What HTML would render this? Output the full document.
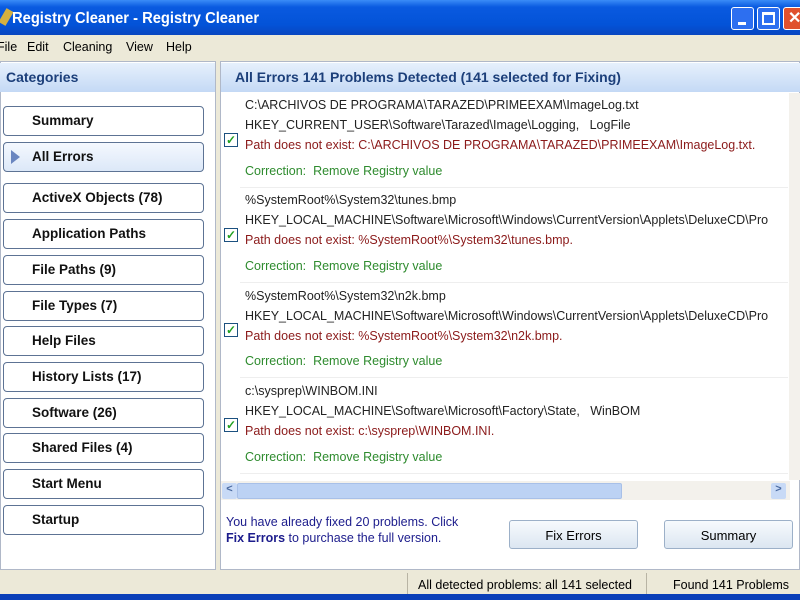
<!DOCTYPE html>
<html><head><style>
*{margin:0;padding:0;box-sizing:border-box}
body{width:800px;height:600px;overflow:hidden;background:#ece9d8;font-family:"Liberation Sans",Tahoma,sans-serif;position:relative;font-size:13px}
.a{position:absolute}
.title{left:0;top:0;width:800px;height:35px;background:linear-gradient(#3a8cf7,#0a5ae0 20%,#0353d8 70%,#0846c0);color:#fff;font-weight:bold;font-size:16px}
.menu{top:35px;left:0;width:800px;height:25px;background:#ece9d8}
.menu span{position:absolute;top:5px;font-size:12.5px}
.hdr{background:linear-gradient(#e6f0fc,#c4d9f5);color:#1c3f7a;font-weight:bold;font-size:14px;height:29px;top:63px;padding:6px}
.btn{position:absolute;left:3px;width:201px;height:30px;border:1px solid #5d7394;border-radius:4px;background:#fff;font-weight:bold;font-size:13.5px;padding:6px 0 0 28px;color:#111}
.sel{background:linear-gradient(#f4f8fe,#dce8f8)}
.e{position:absolute;left:245px;font-size:12.5px;white-space:nowrap;color:#222}
.r{color:#8b1a1a}.g{color:#2e8b2e}
.cb{position:absolute;left:224px;width:14px;height:14px;border:1px solid #1c5180;background:#fff;color:#21a121;font-size:12px;line-height:12px;text-align:center;font-weight:bold}
.div{position:absolute;left:240px;width:548px;height:1px;background:#eee}
.pb{position:absolute;top:520px;height:29px;border:1px solid #9cb0c8;border-radius:3px;background:linear-gradient(#f7fafd,#dce6f1);text-align:center;padding-top:7px;font-size:13px}
</style></head><body>
<div class="a title"><div class="a" style="left:2px;top:9px;width:8px;height:16px;background:#d4b040;transform:rotate(30deg)"></div><div class="a" style="left:12px;top:10px;transform:scaleX(0.92);transform-origin:left">Registry Cleaner - Registry Cleaner</div>
<div class="a" style="left:731px;top:7px;width:23px;height:23px;border:1px solid #fff;border-radius:3px;background:#2d6ff0"><div class="a" style="left:6px;top:14px;width:8px;height:3px;background:#fff"></div></div>
<div class="a" style="left:757px;top:7px;width:23px;height:23px;border:1px solid #fff;border-radius:3px;background:#2d6ff0"><div class="a" style="left:4px;top:4px;width:13px;height:13px;border:2px solid #fff;border-top-width:3px"></div></div>
<div class="a" style="left:783px;top:7px;width:23px;height:23px;border:1px solid #fff;border-radius:3px;background:#e0512e;color:#fff;font-size:16px;padding-left:4px">✕</div>
</div>
<div class="a menu"><span style="left:-3px">File</span><span style="left:27px">Edit</span><span style="left:63px">Cleaning</span><span style="left:126px">View</span><span style="left:166px">Help</span></div>
<div class="a" style="left:0;top:61px;width:216px;height:509px;background:#fff;border:1px solid #b0b8c8"></div>
<div class="a hdr" style="left:0;width:215px">Categories</div>
<div class="btn" style="top:106px">Summary</div>
<div class="btn sel" style="top:142px"><span class="a" style="left:7px;top:7px;width:0;height:0;border-left:9px solid #6a86c0;border-top:7px solid transparent;border-bottom:7px solid transparent"></span>All Errors</div>
<div class="btn" style="top:183px">ActiveX Objects (78)</div>
<div class="btn" style="top:219px">Application Paths</div>
<div class="btn" style="top:255px">File Paths (9)</div>
<div class="btn" style="top:291px">File Types (7)</div>
<div class="btn" style="top:326px">Help Files</div>
<div class="btn" style="top:362px">History Lists (17)</div>
<div class="btn" style="top:398px">Software (26)</div>
<div class="btn" style="top:433px">Shared Files (4)</div>
<div class="btn" style="top:469px">Start Menu</div>
<div class="btn" style="top:505px">Startup</div>
<div class="a" style="left:220px;top:61px;width:580px;height:509px;background:#fff;border:1px solid #b0b8c8"></div>
<div class="a hdr" style="left:221px;width:579px;padding-left:14px">All Errors 141 Problems Detected (141 selected for Fixing)</div>
<div class="a" style="left:789px;top:93px;width:11px;height:387px;background:#f3f1ec"></div>

<div class="e" style="top:98px">C:\ARCHIVOS DE PROGRAMA\TARAZED\PRIMEEXAM\ImageLog.txt</div>
<div class="e" style="top:118px">HKEY_CURRENT_USER\Software\Tarazed\Image\Logging,&nbsp;&nbsp; LogFile</div>
<div class="e r" style="top:138px">Path does not exist: C:\ARCHIVOS DE PROGRAMA\TARAZED\PRIMEEXAM\ImageLog.txt.</div>
<div class="e g" style="top:164px">Correction:&nbsp; Remove Registry value</div>
<div class="cb" style="top:133px">✓</div><div class="div" style="top:187px"></div>

<div class="e" style="top:193px">%SystemRoot%\System32\tunes.bmp</div>
<div class="e" style="top:213px">HKEY_LOCAL_MACHINE\Software\Microsoft\Windows\CurrentVersion\Applets\DeluxeCD\Pro</div>
<div class="e r" style="top:233px">Path does not exist: %SystemRoot%\System32\tunes.bmp.</div>
<div class="e g" style="top:259px">Correction:&nbsp; Remove Registry value</div>
<div class="cb" style="top:228px">✓</div><div class="div" style="top:282px"></div>

<div class="e" style="top:289px">%SystemRoot%\System32\n2k.bmp</div>
<div class="e" style="top:309px">HKEY_LOCAL_MACHINE\Software\Microsoft\Windows\CurrentVersion\Applets\DeluxeCD\Pro</div>
<div class="e r" style="top:329px">Path does not exist: %SystemRoot%\System32\n2k.bmp.</div>
<div class="e g" style="top:354px">Correction:&nbsp; Remove Registry value</div>
<div class="cb" style="top:323px">✓</div><div class="div" style="top:377px"></div>

<div class="e" style="top:384px">c:\sysprep\WINBOM.INI</div>
<div class="e" style="top:404px">HKEY_LOCAL_MACHINE\Software\Microsoft\Factory\State,&nbsp;&nbsp; WinBOM</div>
<div class="e r" style="top:424px">Path does not exist: c:\sysprep\WINBOM.INI.</div>
<div class="e g" style="top:450px">Correction:&nbsp; Remove Registry value</div>
<div class="cb" style="top:418px">✓</div><div class="div" style="top:473px"></div>

<div class="a" style="left:221px;top:481px;width:569px;height:19px;background:#f3f1ec"></div>
<div class="a" style="left:222px;top:483px;width:15px;height:16px;background:#c8daf6;border-radius:2px;color:#4a6aa0;font-size:11px;text-align:center;font-weight:bold">&lt;</div>
<div class="a" style="left:237px;top:483px;width:385px;height:16px;background:#bcd2f4;border:1px solid #a8c0e8;border-radius:2px"></div>
<div class="a" style="left:771px;top:483px;width:15px;height:16px;background:#c8daf6;border-radius:2px;color:#4a6aa0;font-size:11px;text-align:center;font-weight:bold">&gt;</div>

<div class="a" style="left:226px;top:514px;font-size:12.5px;color:#1c1c8c;line-height:16px">You have already fixed 20 problems. Click<br><b>Fix Errors</b> to purchase the full version.</div>
<div class="pb" style="left:509px;width:129px">Fix Errors</div>
<div class="pb" style="left:664px;width:129px">Summary</div>

<div class="a" style="left:407px;top:573px;width:1px;height:21px;background:#b8b4a4"></div>
<div class="a" style="left:646px;top:573px;width:1px;height:21px;background:#b8b4a4"></div>
<div class="a" style="left:418px;top:578px;font-size:12.5px">All detected problems: all 141 selected</div>
<div class="a" style="left:673px;top:578px;font-size:12.5px">Found 141 Problems</div>
<div class="a" style="left:0;top:594px;width:800px;height:6px;background:#0a3fb8"></div>
</body></html>
